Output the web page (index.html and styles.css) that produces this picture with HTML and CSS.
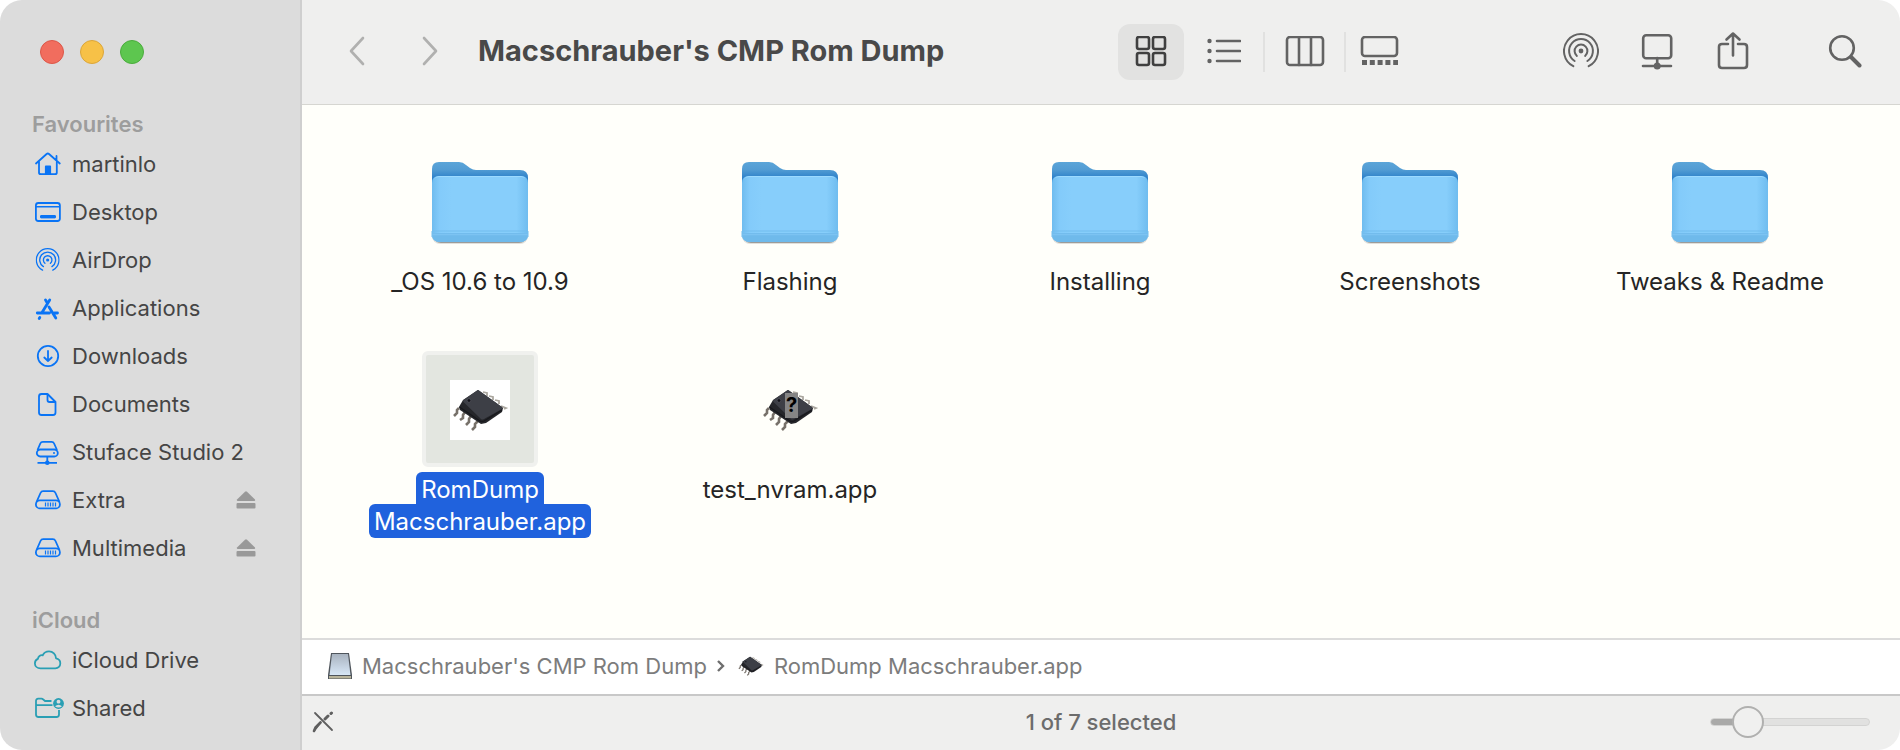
FILE: index.html
```
<!DOCTYPE html>
<html lang="en-GB">

<head>
    <title>Macschrauber's CMP Rom Dump</title>
    <meta charset="utf-8">
    <meta name="viewport" content="width=device-width, initial-scale=1.0">
    <link rel="stylesheet" href="styles.css">
</head>

<body>

    <!-- shapes that are used more than once -->
    <svg class="defs" aria-hidden="true">
        <defs>
            <linearGradient id="folder-back" x1="0" y1="0" x2="0" y2="1">
                <stop offset="0" stop-color="#5ba5d8" />
                <stop offset="0.3" stop-color="#529cd3" />
                <stop offset="0.6" stop-color="#2f82ca" />
                <stop offset="1" stop-color="#2f82ca" />
            </linearGradient>
            <linearGradient id="folder-edge" x1="0" y1="0" x2="1" y2="0">
                <stop offset="0" stop-color="#6fbcef" />
                <stop offset="0.08" stop-color="#83cbfa" />
                <stop offset="0.2" stop-color="#87cefb" />
                <stop offset="0.88" stop-color="#87cefb" />
                <stop offset="1" stop-color="#6fbcef" />
            </linearGradient>
            <linearGradient id="drive-top" x1="0" y1="0" x2="0" y2="1">
                <stop offset="0" stop-color="#a9b3c0" />
                <stop offset="1" stop-color="#d7e7f6" />
            </linearGradient>
        </defs>
        <symbol id="folder" viewBox="0 0 104 88">
            <rect x="4" y="12" width="96" height="72" rx="8" fill="#000" opacity="0.12" />
            <rect x="5" y="12" width="94" height="71" rx="8" fill="#000" opacity="0.3" />
            <path d="M4 22V9q0-7 7-7h20q4 0 7 3l4 3q3 2 6 2h44q8 0 8 8v10H4z" fill="url(#folder-back)" />
            <path d="M4 23q0-7 7-7h82q7 0 7 7v51q0 8-8 8H12q-8 0-8-8z" fill="url(#folder-edge)" />
            <path d="M6 19q2-3 5-3h82q3 0 5 3-2-2-5-2H11q-3 0-5 2z" fill="#9cdaff" />
            <path d="M4 73h96v1q0 8-8 8H12q-8 0-8-8z" fill="#6fbaeb" />
            <path d="M4 74.500h96" stroke="#7cc3f2" stroke-width="1.500" />
            <path d="M4 77v-6h96v6" fill="none" stroke="#72bdee" stroke-width="1" />
        </symbol>
        <symbol id="chip" viewBox="0 0 60 60">
            <g fill="none" stroke="#aaa69e" stroke-width="1.800">
                <path d="M33 12l4 1v3M39 16l4 1v3M45 20l4 1v3M51 26l5 2-2 1" />
            </g>
            <g fill="none" stroke="#77716a" stroke-width="2.600">
                <path d="M9 28l-2 2v3l-3 3M15 32l-2 3v3l-3 2M21 36l-2 3v3l-3 3M28 41l-3 3v3l-3 3" />
            </g>
            <path d="M28 10L13 20l-4 7 1 3 21 14 5-1 16-11 1-4z" fill="#25262a" />
            <path d="M27 10.500q1-1 2 0L52 27q1 1 0 2L34 39q-2 1-3 0L13.500 22q-1-1 0-2z" fill="#3d3f46" />
            <path d="M9.500 27L30 41q2 1 4 0l18-11" fill="none" stroke="#17181c" stroke-width="1.200" />
            <circle cx="19" cy="20.500" r="1.800" fill="#111117" stroke="#55565e" stroke-width="0.600" />
        </symbol>
        <symbol id="airdrop" viewBox="0 0 36 36">
            <circle cx="18" cy="18" r="2.400" fill="currentColor" />
            <g fill="none" stroke="currentColor" stroke-width="2" stroke-linecap="round">
                <path d="M13.900 22.900a6.400 6.400 0 1 1 8.200 0" />
                <path d="M11.600 28a11.900 11.900 0 1 1 12.800 0" />
                <path d="M10.300 33.200a17 17 0 1 1 15.400 0" />
            </g>
        </symbol>
        <symbol id="disk" viewBox="0 0 32 32">
            <g fill="none" stroke="currentColor" stroke-width="1.800" stroke-linejoin="round">
                <path d="M5.500 18L9.500 9q.8-1.800 2.700-1.800h9.600q1.900 0 2.700 1.800l4 9" />
                <rect x="4.900" y="16.400" width="24" height="8" rx="4" />
            </g>
            <path d="M14.500 18.500v4M17 18.500v4M19.500 18.500v4M22 18.500v4M24.500 18.500v4" stroke="currentColor" stroke-width="1.200" />
        </symbol>
        <symbol id="eject" viewBox="0 0 20 20">
            <path d="M9 1.700q1-.9 2 0l8 7.800q.7 1.500-1 1.500H2q-1.700 0-1-1.500z" fill="currentColor" />
            <rect x="0.500" y="13" width="19" height="5.500" rx="1" fill="currentColor" />
        </symbol>
    </svg>

    <div class="window">

        <aside class="sidebar">
            <div class="lights">
                <button class="light red" aria-label="Close"></button>
                <button class="light yellow" aria-label="Minimise"></button>
                <button class="light green" aria-label="Zoom"></button>
            </div>

            <h2>Favourites</h2>
            <ul class="places">
                <li>
                    <a href="#">
                        <svg viewBox="0 0 32 32" fill="none" stroke="currentColor" stroke-width="1.800" stroke-linecap="round" stroke-linejoin="round">
                            <path d="M5 15.500L15.600 6q1.200-1 2.400 0L28.800 15.500M25.500 12V8" />
                            <path d="M8 14v10.500q0 1.700 1.700 1.700h14.400q1.700 0 1.700-1.700V14" />
                            <path d="M14.800 26v-7.500h4.400V26z" fill="currentColor" />
                        </svg>
                        martinlo
                    </a>
                </li>
                <li>
                    <a href="#">
                        <svg viewBox="0 0 32 32" fill="none" stroke="currentColor" stroke-width="1.800">
                            <rect x="4.900" y="7" width="24" height="18" rx="2.500" />
                            <path d="M5 10.800h24" stroke-width="1.500" />
                            <rect x="9.500" y="19.500" width="15" height="2.400" rx="0.500" fill="currentColor" stroke-width="1" />
                        </svg>
                        Desktop
                    </a>
                </li>
                <li>
                    <a href="#">
                        <svg viewBox="-7 -6 48 48">
                            <use href="#airdrop" width="36" height="36" />
                        </svg>
                        AirDrop
                    </a>
                </li>
                <li>
                    <a href="#">
                        <svg viewBox="0 0 32 32" fill="none" stroke="currentColor" stroke-width="2.800" stroke-linecap="round">
                            <path d="M18.700 8L11 20.500M14.500 8l1.800 3M6.300 21h12.200M23.500 21H26.500M18 15l6.800 11M8.800 25.500l-.6 1" />
                        </svg>
                        Applications
                    </a>
                </li>
                <li>
                    <a href="#">
                        <svg viewBox="0 0 32 32" fill="none" stroke="currentColor" stroke-width="1.800" stroke-linecap="round" stroke-linejoin="round">
                            <circle cx="17" cy="16" r="10.200" />
                            <path d="M17 11v10M13.300 17.500L17 21l3.700-3.500" />
                        </svg>
                        Downloads
                    </a>
                </li>
                <li>
                    <a href="#">
                        <svg viewBox="0 0 32 32" fill="none" stroke="currentColor" stroke-width="1.800" stroke-linejoin="round">
                            <path d="M8 8.500q0-2.500 2.500-2.500h6l8 8v10.500q0 2.500-2.500 2.500H10.500Q8 27 8 24.500z" />
                            <path d="M16.500 6v6q0 2 2 2h6" />
                        </svg>
                        Documents
                    </a>
                </li>
                <li>
                    <a href="#">
                        <svg viewBox="0 0 32 32" fill="none" stroke="currentColor" stroke-width="1.800" stroke-linejoin="round">
                            <path d="M6.500 14L9.300 7.500q.7-1.600 2.500-1.600h8.800q1.800 0 2.500 1.600L26 14" />
                            <rect x="5.800" y="13.500" width="21" height="7" rx="3.500" />
                            <circle cx="23" cy="17" r="1" fill="currentColor" stroke="none" />
                            <path d="M16.300 20.500v6M6.500 26.800h19.500" />
                            <circle cx="16.300" cy="26.800" r="2.300" fill="currentColor" stroke="none" />
                        </svg>
                        Stuface Studio 2
                    </a>
                </li>
                <li>
                    <a href="#">
                        <svg viewBox="0 0 32 32"><use href="#disk" /></svg>
                        Extra
                    </a>
                    <button class="eject" aria-label="Eject Extra"><svg viewBox="0 0 20 20"><use href="#eject" /></svg></button>
                </li>
                <li>
                    <a href="#">
                        <svg viewBox="0 0 32 32"><use href="#disk" /></svg>
                        Multimedia
                    </a>
                    <button class="eject" aria-label="Eject Multimedia"><svg viewBox="0 0 20 20"><use href="#eject" /></svg></button>
                </li>
            </ul>

            <h2>iCloud</h2>
            <ul class="places cloud">
                <li>
                    <a href="#">
                        <svg viewBox="0 0 32 32" fill="none" stroke="currentColor" stroke-width="1.800" stroke-linejoin="round">
                            <path d="M9.500 24.300h14.800c3 0 5-2.300 5-5s-1.800-4.600-4.300-5c0-4-3.200-7-7-7-3 0-5.200 1.500-6.300 4-2.400-.5-4.500 1-4.800 3.600-1.800.7-3 2.500-3 4.500 0 2.800 2.400 4.900 5.600 4.900z" />
                        </svg>
                        iCloud Drive
                    </a>
                </li>
                <li>
                    <a href="#">
                        <svg viewBox="0 0 32 32" fill="none" stroke="currentColor" stroke-width="1.800" stroke-linejoin="round">
                            <path d="M20.500 9H14l-2-1.700q-.6-.6-1.500-.6H7.200Q5 6.700 5 9v13.500Q5 25 7.500 25h18q2.500 0 2.500-2.500V18M5 13.200h16.500" />
                            <circle cx="27.500" cy="11.500" r="5.400" fill="currentColor" stroke="none" />
                            <circle cx="27.500" cy="9.700" r="1.900" fill="#dcdcdc" stroke="none" />
                            <path d="M24 14.200q3.500-3 7 0-3.500 2.800-7 0z" fill="#dcdcdc" stroke="none" />
                        </svg>
                        Shared
                    </a>
                </li>
            </ul>
        </aside>

        <main>

            <header class="toolbar">
                <button class="tool nav" aria-label="Back">
                    <svg width="20" height="32" viewBox="0 0 20 32"><path d="M16 3L4 16l12 13" /></svg>
                </button>
                <button class="tool nav" aria-label="Forward">
                    <svg width="20" height="32" viewBox="0 0 20 32"><path d="M3 3l12 13L3 29" /></svg>
                </button>

                <h1>Macschrauber's CMP Rom Dump</h1>

                <div class="views">
                    <button class="tool selected" aria-label="Icons">
                        <svg width="32" height="32" viewBox="0 0 32 32">
                            <rect x="2" y="1" width="12" height="12" rx="2" />
                            <rect x="18" y="1" width="12" height="12" rx="2" />
                            <rect x="2" y="17" width="12" height="12" rx="2" />
                            <rect x="18" y="17" width="12" height="12" rx="2" />
                        </svg>
                    </button>
                    <button class="tool view" aria-label="List">
                        <svg width="34" height="32" viewBox="0 0 34 32">
                            <path d="M10 5h23M10 15h23M10 25h23" />
                            <g class="solid"><circle cx="2.500" cy="5" r="2.200" /><circle cx="2.500" cy="15" r="2.200" /><circle cx="2.500" cy="25" r="2.200" /></g>
                        </svg>
                    </button>
                    <span class="divider"></span>
                    <button class="tool view" aria-label="Columns">
                        <svg width="40" height="32" viewBox="0 0 40 32">
                            <rect x="2" y="1" width="36" height="28" rx="3" />
                            <path d="M14 1v28M26 1v28" />
                        </svg>
                    </button>
                    <span class="divider"></span>
                    <button class="tool gallery" aria-label="Gallery">
                        <svg width="40" height="32" viewBox="0 0 40 32">
                            <rect x="2" y="1" width="35" height="19" rx="3" />
                            <path d="M2 26.500h36" stroke-dasharray="5 2.800" class="dots" />
                        </svg>
                    </button>
                </div>

                <div class="actions">
                    <button class="tool action" aria-label="AirDrop">
                        <svg width="36" height="36" viewBox="0 0 36 36" class="plain"><use href="#airdrop" /></svg>
                    </button>
                    <button class="tool action" aria-label="Connect">
                        <svg width="32" height="38" viewBox="0 0 32 38">
                            <rect x="2.200" y="3.200" width="28" height="23" rx="3" />
                            <path d="M16.200 26v8M2 34h28" />
                            <circle cx="16.200" cy="34" r="3.500" class="solid" />
                        </svg>
                    </button>
                    <button class="tool action" aria-label="Share">
                        <svg width="32" height="40" viewBox="0 0 32 40">
                            <path d="M11 13H5q-3 0-3 3v18q0 3 3 3h22q3 0 3-3V16q0-3-3-3h-6M16 24.500V3M9.500 8.500L16 2.500l6.500 6" />
                        </svg>
                    </button>
                    <button class="tool action search" aria-label="Search">
                        <svg width="34" height="34" viewBox="0 0 34 34">
                            <circle cx="14" cy="14" r="11.800" />
                            <path d="M23 23l8.500 8.500" class="handle" />
                        </svg>
                    </button>
                </div>
            </header>

            <section class="files">
                <article class="file">
                    <div class="icon"><svg class="folder" viewBox="0 0 104 88"><use href="#folder" /></svg></div>
                    <p><span>_OS 10.6 to 10.9</span></p>
                </article>
                <article class="file">
                    <div class="icon"><svg class="folder" viewBox="0 0 104 88"><use href="#folder" /></svg></div>
                    <p><span>Flashing</span></p>
                </article>
                <article class="file">
                    <div class="icon"><svg class="folder" viewBox="0 0 104 88"><use href="#folder" /></svg></div>
                    <p><span>Installing</span></p>
                </article>
                <article class="file">
                    <div class="icon"><svg class="folder" viewBox="0 0 104 88"><use href="#folder" /></svg></div>
                    <p><span>Screenshots</span></p>
                </article>
                <article class="file">
                    <div class="icon"><svg class="folder" viewBox="0 0 104 88"><use href="#folder" /></svg></div>
                    <p><span>Tweaks &amp; Readme</span></p>
                </article>
                <article class="file chosen">
                    <div class="icon"><svg class="app" viewBox="0 0 60 60"><use href="#chip" /></svg></div>
                    <p><span>RomDump</span><span>Macschrauber.app</span></p>
                </article>
                <article class="file">
                    <div class="icon">
                        <svg class="app" viewBox="0 0 60 60">
                            <use href="#chip" />
                            <rect x="25" y="13" width="13" height="25" fill="#858585" />
                            <text x="31.500" y="32" class="mark">?</text>
                        </svg>
                    </div>
                    <p><span>test_nvram.app</span></p>
                </article>
            </section>

            <nav class="path">
                <svg width="26" height="28" viewBox="0 0 26 28">
                    <path d="M4 1h18l3 22v4H1v-4z" fill="#4f555c" />
                    <path d="M5 2h16l2.500 21h-21z" fill="url(#drive-top)" />
                    <path d="M2 24h22v2.500H2z" fill="#b8b49b" />
                </svg>
                <a href="#">Macschrauber's CMP Rom Dump</a>
                <svg class="arrow" width="10" height="14" viewBox="0 0 10 14"><path d="M2 2l5 5-5 5" fill="none" stroke="#6e6e6e" stroke-width="2.400" /></svg>
                <svg width="28" height="28" viewBox="0 0 60 60"><use href="#chip" /></svg>
                <a href="#">RomDump Macschrauber.app</a>
            </nav>

            <footer>
                <svg class="readonly" width="22" height="22" viewBox="0 0 22 22" fill="none" stroke="#5f5f5f" stroke-linecap="round">
                    <path d="M3 2l17 17" stroke-width="1.800" />
                    <path d="M2 20l1.500-3.500L8.500 11.500" stroke-width="2.600" />
                    <path d="M8.500 11.500L2 20" stroke-width="2" />
                    <path d="M13 8l3-3M19 2.500l.5-.5" stroke-width="3" />
                </svg>
                <p>1 of 7 selected</p>
                <input type="range" min="0" max="100" value="17" aria-label="Icon size">
            </footer>

        </main>

    </div>

</body>

</html>
```
FILE: styles.css
```
* {
    box-sizing: border-box;
}

body {
    margin: 0;
    background-color: #ffffff;
    font-family: Inter, "Liberation Sans", sans-serif;
    font-size: 22px;
    color: #454545;
}

h1, h2, p, ul {
    margin: 0;
    padding: 0;
}

a {
    color: inherit;
    text-decoration: none;
}

button {
    padding: 0;
    border: none;
    background: none;
    color: inherit;
}

.defs {
    position: absolute;
    width: 0;
    height: 0;
}

.window {
    display: grid;
    grid-template-columns: 302px 1fr;
    min-height: 100vh;
    border-radius: 22px;
    overflow: hidden;
}


/* sidebar */

.sidebar {
    background-color: #dcdcdc;
    border-right: 2px solid #cfcfcf;
    padding-top: 40px;
}

.lights {
    display: flex;
    gap: 16px;
    padding-left: 40px;
    margin-bottom: 44px;
}

.light {
    width: 24px;
    height: 24px;
    border-radius: 50%;
}

.red {
    background-color: #f16d5e;
    border: 1px solid #dc5748;
}

.yellow {
    background-color: #f7c147;
    border: 1px solid #dba63a;
}

.green {
    background-color: #5dc64f;
    border: 1px solid #4aac3c;
}

.sidebar h2 {
    padding-left: 32px;
    font-size: 22px;
    line-height: 32px;
    font-weight: 600;
    color: #9d9d9d;
}

.places {
    list-style: none;
    margin-bottom: 32px;
}

.cloud {
    margin-bottom: 0;
}

.places li {
    display: flex;
    align-items: center;
    height: 48px;
    padding-left: 31px;
    padding-right: 44px;
}

.places a {
    display: flex;
    align-items: center;
    flex: 1;
    gap: 9px;
    white-space: nowrap;
}

.places a svg {
    width: 32px;
    height: 32px;
    color: #0a74f5;
    overflow: visible;
}

.cloud a svg {
    color: #2a9fb4;
}

.eject {
    width: 20px;
    height: 20px;
    color: #999999;
}

.eject svg {
    display: block;
}


/* toolbar */

main {
    display: flex;
    flex-direction: column;
    min-width: 0;
}

.toolbar {
    display: flex;
    align-items: center;
    height: 105px;
    padding: 0 17px 3px 18px;
    background-color: #efefee;
    border-bottom: 1px solid #d6d6d1;
}

h1 {
    flex: 1;
    padding-left: 10px;
    font-size: 29px;
    line-height: 40px;
    font-weight: 700;
    color: #494949;
    white-space: nowrap;
}

.tool {
    display: flex;
    align-items: center;
    justify-content: center;
    height: 56px;
    color: #636363;
}

.tool svg {
    fill: none;
    stroke: currentColor;
    stroke-width: 2.6;
    stroke-linecap: round;
    stroke-linejoin: round;
}

.tool svg.plain {
    stroke: none;
}

.tool .solid {
    fill: currentColor;
    stroke: none;
}

.tool .dots {
    stroke-width: 5;
    stroke-linecap: butt;
}

.tool .handle {
    stroke-width: 4;
}

.nav {
    width: 74px;
    color: #b0b0af;
}

.views, .actions {
    display: flex;
    align-items: center;
}

.views {
    padding-top: 2px;
}

.selected {
    width: 66px;
    border-radius: 12px;
    background-color: #e2e2e1;
    color: #404040;
}

.view {
    width: 79px;
}

.gallery {
    width: 68px;
}

.divider {
    width: 2px;
    height: 40px;
    background-color: #e1e1e0;
}

.actions {
    margin-left: 129px;
}

.action {
    width: 76px;
}

.search {
    margin-left: 36px;
}


/* files */

.files {
    flex: 1;
    display: grid;
    grid-template-columns: repeat(5, 1fr);
    grid-auto-rows: 208px;
    padding: 38px 25px 0 23px;
    background-color: #fffffa;
}

.file {
    display: flex;
    flex-direction: column;
    align-items: center;
}

.icon {
    display: flex;
    align-items: center;
    justify-content: center;
    width: 116px;
    height: 116px;
    padding-top: 2px;
    border: 4px solid transparent;
    border-radius: 6px;
}

.folder {
    width: 104px;
    height: 88px;
    margin-top: 4px;
}

.app {
    width: 60px;
    height: 60px;
}

.mark {
    font-size: 20px;
    font-weight: 700;
    text-anchor: middle;
    fill: #000000;
}

.file p {
    display: flex;
    flex-direction: column;
    align-items: center;
    margin-top: 5px;
    font-size: 24px;
    line-height: 32px;
    color: #252525;
    white-space: nowrap;
}

.file span {
    padding: 2px 5px 0 5px;
}

.chosen .icon {
    background-color: #e3e6e0;
    border-color: #f0f1ee;
}

.chosen .app {
    background-color: #ffffff;
}

.chosen span {
    background-color: #2062dd;
    border-radius: 6px;
    color: #ffffff;
}

.chosen span:first-child {
    border-radius: 6px 6px 0 0;
}

/* the two lines of a long name join into one label */
.chosen span + span {
    margin-top: -2px;
}


/* path and status */

.path {
    display: flex;
    align-items: center;
    height: 56px;
    padding: 0 0 2px 25px;
    background-color: #ffffff;
    border-top: 2px solid #dcdcdb;
    color: #7c7c7c;
    white-space: nowrap;
}

.path a {
    padding-left: 9px;
}

.arrow {
    margin: 0 11px 0 9px;
}

footer {
    display: grid;
    grid-template-columns: 1fr auto 1fr;
    align-items: center;
    height: 56px;
    padding: 0 10px 2px 10px;
    background-color: #efefee;
    border-top: 2px solid #c8c8c8;
    color: #6c6c6c;
}

footer p {
    font-weight: 500;
}

footer input {
    justify-self: end;
    appearance: none;
    width: 160px;
    height: 32px;
    margin: 0 20px 0 0;
    background: none;
}

footer input::-webkit-slider-runnable-track {
    height: 8px;
    border: 1px solid #d3d3d2;
    border-radius: 4px;
    background: linear-gradient(to right, #a9a9a8 24%, #e1e1e0 24%);
}

footer input::-webkit-slider-thumb {
    appearance: none;
    width: 32px;
    height: 32px;
    margin-top: -13px;
    border: 2px solid #b0b0af;
    border-radius: 50%;
    background-color: #f0f0ef;
}
```
